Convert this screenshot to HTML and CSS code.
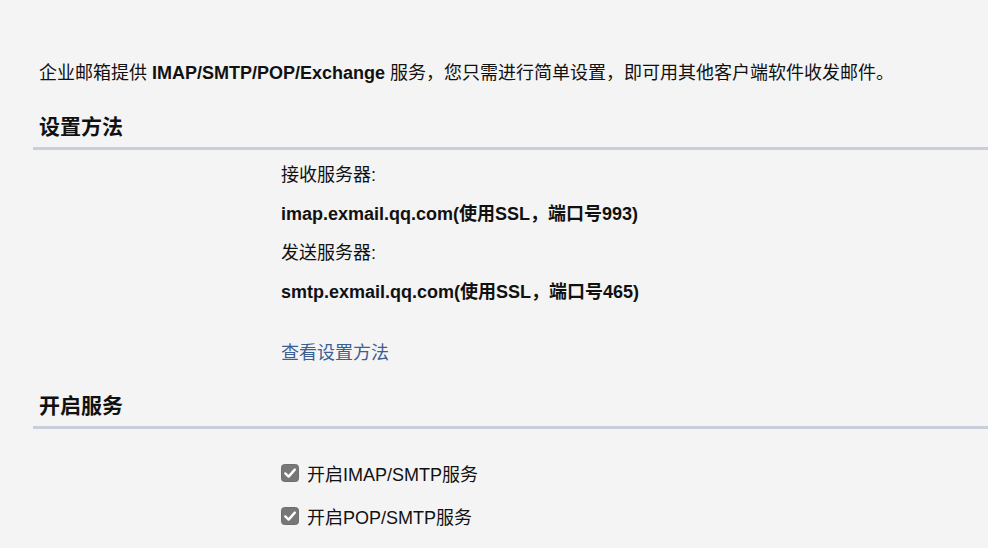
FILE: index.html
```html
<!DOCTYPE html>
<html lang="zh-CN">
<head>
    <meta charset="UTF-8">
    <meta name="viewport" content="width=device-width, initial-scale=1.0">
    <title>客户端设置</title>
    <link rel="stylesheet" href="styles.css">
</head>
<body>
    <div class="page">
        <p class="intro">企业邮箱提供 <strong>IMAP/SMTP/POP/Exchange</strong> 服务，您只需进行简单设置，即可用其他客户端软件收发邮件。</p>

        <div class="section-head">
            <h2>设置方法</h2>
        </div>
        <div class="setting-list">
            <div class="row">接收服务器:</div>
            <div class="row"><strong>imap.exmail.qq.com(使用SSL，端口号993)</strong></div>
            <div class="row">发送服务器:</div>
            <div class="row"><strong>smtp.exmail.qq.com(使用SSL，端口号465)</strong></div>
            <div class="row link-row"><a href="#">查看设置方法</a></div>
        </div>

        <div class="section-head">
            <h2>开启服务</h2>
        </div>
        <div class="service-list">
            <label class="check-row">
                <span class="check-box">
                    <svg width="18" height="18" viewBox="0 0 18 18"><rect x="0.5" y="0.5" width="17" height="17" rx="3" fill="#777" stroke="#6e6e6e"/><path d="M4.3 9.4 L7.6 12.6 L13.8 5.6" fill="none" stroke="#fff" stroke-width="2.4" stroke-linecap="round" stroke-linejoin="round"/></svg>
                </span>
                开启IMAP/SMTP服务
            </label>
            <label class="check-row">
                <span class="check-box">
                    <svg width="18" height="18" viewBox="0 0 18 18"><rect x="0.5" y="0.5" width="17" height="17" rx="3" fill="#777" stroke="#6e6e6e"/><path d="M4.3 9.4 L7.6 12.6 L13.8 5.6" fill="none" stroke="#fff" stroke-width="2.4" stroke-linecap="round" stroke-linejoin="round"/></svg>
                </span>
                开启POP/SMTP服务
            </label>
        </div>
    </div>
</body>
</html>
```

FILE: styles.css
```css
body {
    margin: 0;
    background-color: #f4f4f4;
    color: #111;
    font-family: "Liberation Sans", "Noto Sans CJK SC", sans-serif;
    font-size: 18px;
}
.page {
    padding-top: 61px;
}
.intro {
    margin: 0 0 28px 0;
    padding-left: 39px;
    line-height: 24px;
}
.section-head {
    margin-left: 33px;
    padding: 0 0 6px 6px;
    border-bottom: 3px solid #c9cedb;
}
.section-head h2 {
    margin: 0;
    font-size: 21px;
    line-height: 28px;
    font-weight: bold;
}
.setting-list {
    padding: 6px 0 19px 281px;
}
.row {
    line-height: 39px;
}
.link-row {
    margin-top: 22px;
}
.link-row a {
    color: #3b5e95;
    text-decoration: none;
}
.link-row a:hover {
    text-decoration: underline;
}
.service-list {
    padding: 22px 0 0 281px;
}
.check-row {
    display: flex;
    align-items: center;
    gap: 8px;
    height: 43px;
}
.check-box {
    display: flex;
    width: 18px;
    height: 18px;
}
```
